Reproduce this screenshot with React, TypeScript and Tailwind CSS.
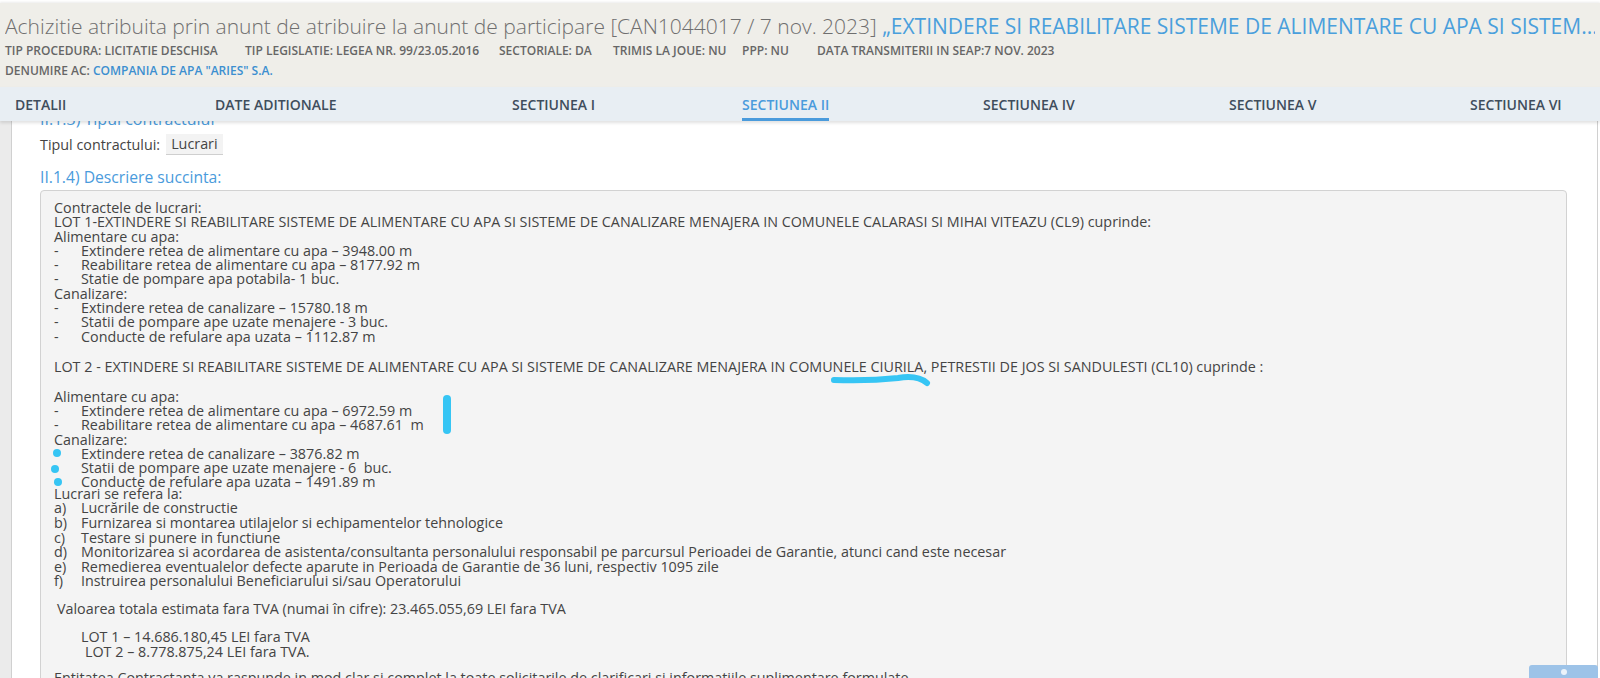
import React from "react";

const tabs = [
  { label: "DETALII", w: "w-[200px]" },
  { label: "DATE ADITIONALE", w: "w-[297px]" },
  { label: "SECTIUNEA I", w: "w-[230px]" },
  { label: "SECTIUNEA II", w: "w-[241px]", active: true },
  { label: "SECTIUNEA IV", w: "w-[246px]" },
  { label: "SECTIUNEA V", w: "w-[241px]" },
  { label: "SECTIUNEA VI", w: "w-[100px]" },
];

const meta = [
  { text: "TIP PROCEDURA: LICITATIE DESCHISA", w: "w-[240px]" },
  { text: "TIP LEGISLATIE: LEGEA NR. 99/23.05.2016", w: "w-[254px]" },
  { text: "SECTORIALE: DA", w: "w-[114px]" },
  { text: "TRIMIS LA JOUE: NU", w: "w-[129px]" },
  { text: "PPP: NU", w: "w-[75px]" },
  { text: "DATA TRANSMITERII IN SEAP:7 NOV. 2023", w: "" },
];

function Dash({ children }: { children: React.ReactNode }) {
  return (
    <div className="flex">
      <span className="w-[27px] shrink-0">-</span>
      <span>{children}</span>
    </div>
  );
}

function Item({ k, children }: { k: string; children: React.ReactNode }) {
  return (
    <div className="flex">
      <span className="w-[27px] shrink-0">{k}</span>
      <span>{children}</span>
    </div>
  );
}

export default function App() {
  return (
    <div className="relative h-[678px] w-[1600px] overflow-hidden bg-white font-['Open_Sans',sans-serif]">
      <div className="h-[3px] bg-white" />

      {/* Header */}
      <header className="h-[84px] bg-[#efeee9] px-[5px] pt-[8px] shadow-[0_-1px_2px_rgba(0,0,0,0.08)]">
        <h1 className="overflow-hidden whitespace-nowrap text-[21px] leading-[30px] font-light text-[#6f6f6f]">
          Achizitie atribuita prin anunt de atribuire la anunt de participare [CAN1044017 / 7 nov. 2023]{" "}
          <span className="font-normal text-[#4a9fdc]">
            „EXTINDERE SI REABILITARE SISTEME DE ALIMENTARE CU APA SI SISTEM...
          </span>
        </h1>
        <div className="mt-[2px] flex text-[12px] leading-[16px] font-semibold text-[#666]">
          {meta.map((m) => (
            <span key={m.text} className={`${m.w} shrink-0 whitespace-nowrap`}>
              {m.text}
            </span>
          ))}
        </div>
        <div className="mt-[4px] text-[12px] leading-[16px] font-semibold text-[#666]">
          DENUMIRE AC: <span className="text-[#3c8fd0]">COMPANIA DE APA "ARIES" S.A.</span>
        </div>
      </header>

      {/* Tabs */}
      <nav className="relative z-10 flex h-[34px] items-stretch bg-[#e8eef3] pl-[15px] shadow-[0_2px_3px_rgba(0,0,0,0.12)]">
        {tabs.map((t) => (
          <div key={t.label} className={`${t.w} shrink-0`}>
            <span
              className={`inline-flex h-full items-center border-b-[3px] pt-[3px] text-[14px] font-semibold ${
                t.active ? "border-[#4a9bdc] text-[#4a9bdc]" : "border-transparent text-[#3f4d5c]"
              }`}
            >
              {t.label}
            </span>
          </div>
        ))}
      </nav>

      {/* Body */}
      <div className="flex h-[557px]">
        <div className="w-[11px] shrink-0 bg-[#ebebeb]" />
        <div className="w-[1587px] shrink-0 overflow-hidden border-x border-[#d0d0d0] bg-white pl-[28px]">
          <h3 className="mt-[-12px] text-[16px] leading-[20px] text-[#4a9bdc]">II.1.3) Tipul contractului</h3>
          <div className="mt-[5px] flex items-center text-[14.33px] leading-[20px] text-[#444]">
            <span>Tipul contractului:</span>
            <span className="ml-[6px] border-b border-[#cfcfcf] bg-[#f3f3f3] px-[5px]">Lucrari</span>
          </div>
          <h3 className="mt-[11px] text-[15.7px] leading-[22px] text-[#4a9bdc]">II.1.4) Descriere succinta:</h3>

          <div className="mt-[2px] w-[1527px] rounded-[4px] border border-[#d2d2d2] bg-[#f4f4f4] pl-[13px] pt-[10px] pb-[20px] text-[14.33px] leading-[14.3px] text-[#444]">
            <div>Contractele de lucrari:</div>
            <div>
              LOT 1-EXTINDERE SI REABILITARE SISTEME DE ALIMENTARE CU APA SI SISTEME DE CANALIZARE MENAJERA IN COMUNELE CALARASI SI MIHAI VITEAZU (CL9) cuprinde:
            </div>
            <div>Alimentare cu apa:</div>
            <Dash>Extindere retea de alimentare cu apa – 3948.00 m</Dash>
            <Dash>Reabilitare retea de alimentare cu apa – 8177.92 m</Dash>
            <Dash>Statie de pompare apa potabila- 1 buc.</Dash>
            <div>Canalizare:</div>
            <Dash>Extindere retea de canalizare – 15780.18 m</Dash>
            <Dash>Statii de pompare ape uzate menajere - 3 buc.</Dash>
            <Dash>Conducte de refulare apa uzata – 1112.87 m</Dash>
            <div className="h-[15.7px]" />
            <div>
              LOT 2 - EXTINDERE SI REABILITARE SISTEME DE ALIMENTARE CU APA SI SISTEME DE CANALIZARE MENAJERA IN COMUNELE CIURILA, PETRESTII DE JOS SI SANDULESTI (CL10) cuprinde :
            </div>
            <div className="h-[15.7px]" />
            <div>Alimentare cu apa:</div>
            <Dash>Extindere retea de alimentare cu apa – 6972.59 m</Dash>
            <Dash>Reabilitare retea de alimentare cu apa – 4687.61&nbsp; m</Dash>
            <div>Canalizare:</div>
            <Dash>Extindere retea de canalizare – 3876.82 m</Dash>
            <Dash>Statii de pompare ape uzate menajere - 6&nbsp; buc.</Dash>
            <Dash>Conducte de refulare apa uzata – 1491.89 m</Dash>

            <div className="mt-[-3px] leading-[14.6px]">
              <div>Lucrari se refera la:</div>
              <Item k="a)">Lucrările de constructie</Item>
              <Item k="b)">Furnizarea si montarea utilajelor si echipamentelor tehnologice</Item>
              <Item k="c)">Testare si punere in functiune</Item>
              <Item k="d)">
                Monitorizarea si acordarea de asistenta/consultanta personalului responsabil pe parcursul Perioadei de Garantie, atunci cand este necesar
              </Item>
              <Item k="e)">Remedierea eventualelor defecte aparute in Perioada de Garantie de 36 luni, respectiv 1095 zile</Item>
              <Item k="f)">Instruirea personalului Beneficiarului si/sau Operatorului</Item>
              <div className="h-[13px]" />
              <div className="pl-[3px]">Valoarea totala estimata fara TVA (numai în cifre): 23.465.055,69 LEI fara TVA</div>
              <div className="h-[14px]" />
              <div className="pl-[27px]">LOT 1 – 14.686.180,45 LEI fara TVA</div>
              <div className="pl-[31px]">LOT 2 – 8.778.875,24 LEI fara TVA.</div>
              <div className="h-[11px]" />
              <div>
                Entitatea Contractanta va raspunde in mod clar si complet la toate solicitarile de clarificari si informatiile suplimentare formulate.
              </div>
            </div>
          </div>
        </div>
        <div className="w-[2px] shrink-0 bg-white" />
      </div>

      {/* Scroll-top button */}
      <div className="absolute bottom-0 left-[1529px] flex h-[13px] w-[69px] justify-center rounded-t-[3px] bg-[#9dc3e8]">
        <span className="mt-[4px] h-[6px] w-[6px] rounded-full bg-white/80" />
      </div>

      {/* Marker annotations */}
      <svg className="pointer-events-none absolute inset-0" width="1600" height="678">
        <g stroke="#36c5f4" strokeLinecap="round" fill="none">
          <path d="M834 380 C 860 381, 880 380, 898 378 C 910 376, 920 377, 927 383" strokeWidth="6" />
          <path d="M447 399 L 447 430" strokeWidth="8" />
        </g>
        <g fill="#36c5f4">
          <circle cx="57" cy="453" r="4" />
          <circle cx="55" cy="469" r="4" />
          <circle cx="58" cy="482" r="4" />
        </g>
      </svg>
    </div>
  );
}
